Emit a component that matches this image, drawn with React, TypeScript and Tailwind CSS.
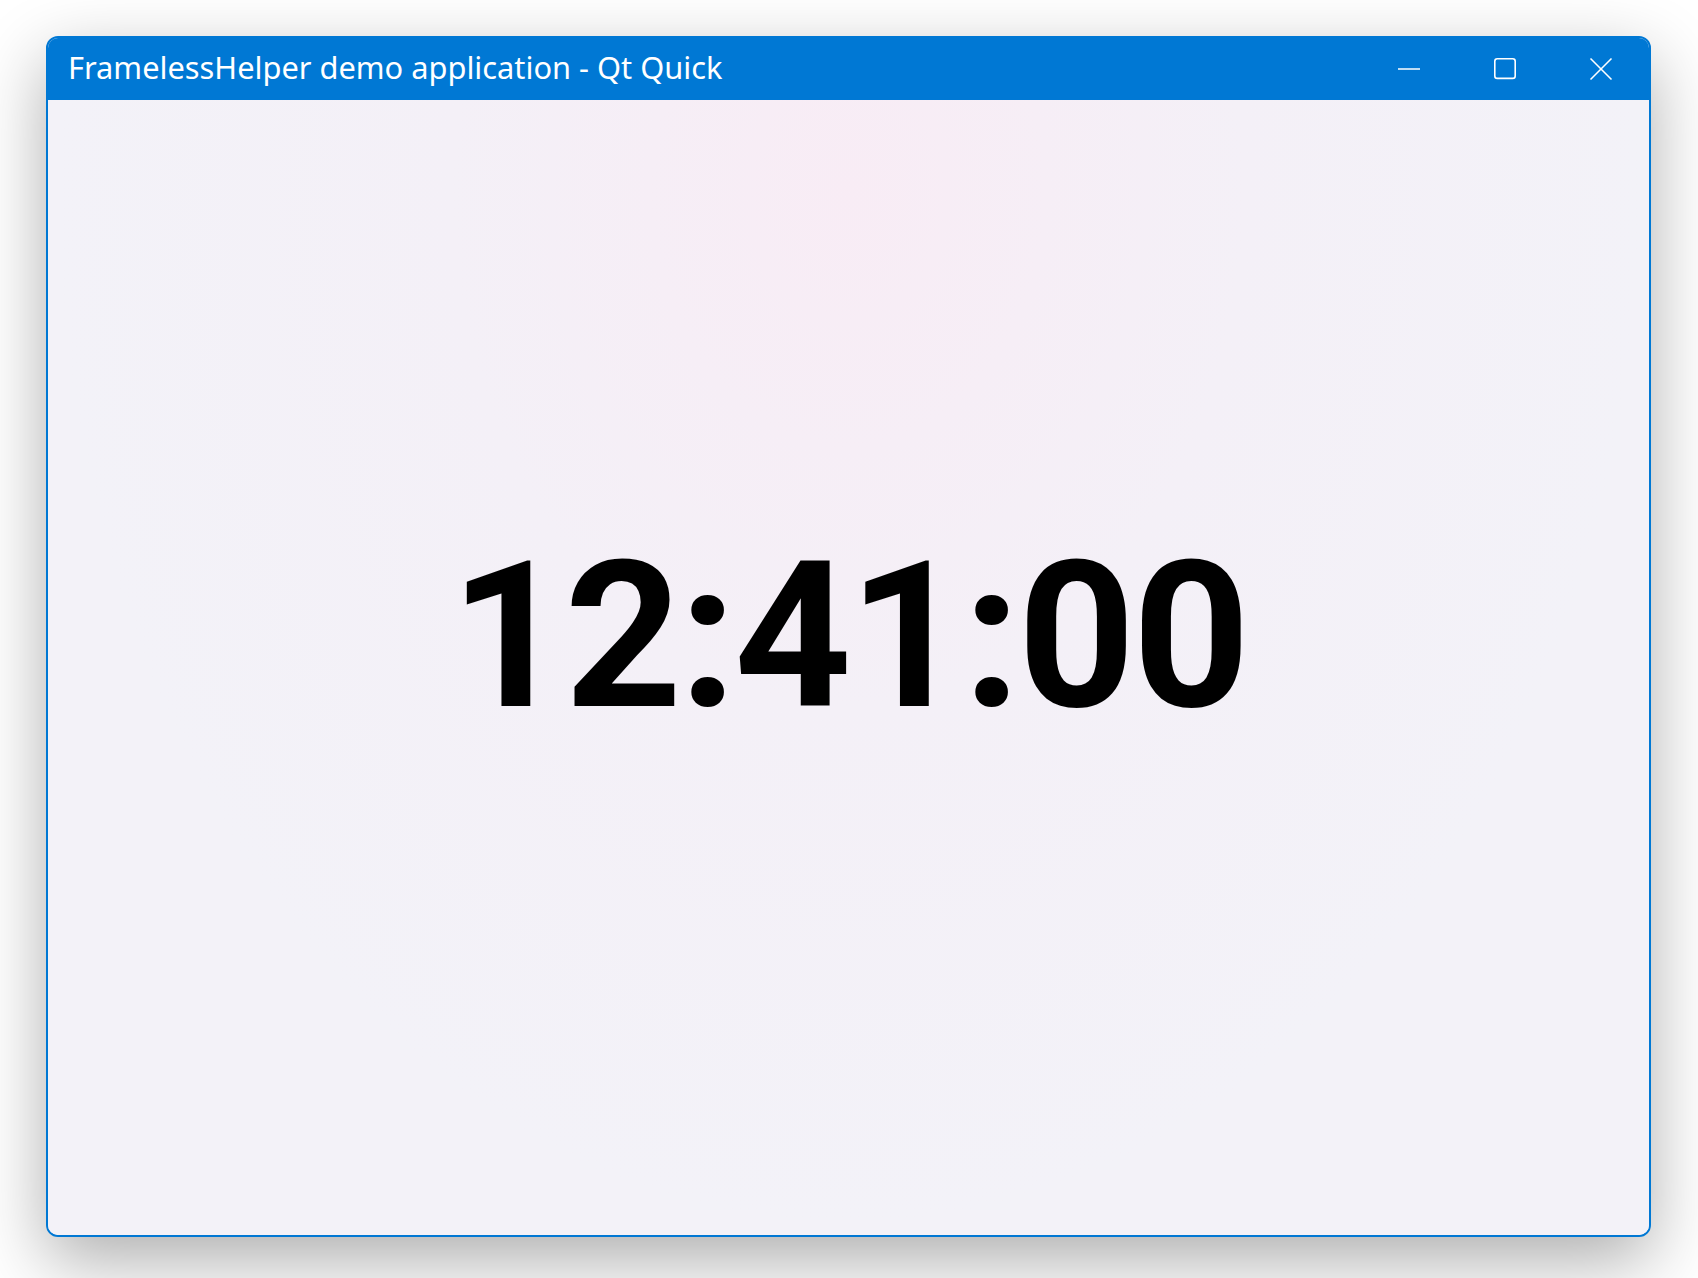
import { FC } from 'react'

const TitleButton: FC<{ kind: 'min' | 'max' | 'close' }> = ({ kind }) => (
  <div className="flex h-full w-[96px] items-center justify-center">
    <svg width="24" height="24" viewBox="0 0 24 24" fill="none" stroke="white" strokeWidth="1.6">
      {kind === 'min' && <line x1="1" y1="12" x2="23" y2="12" />}
      {kind === 'max' && <rect x="1.8" y="1.8" width="20.4" height="19.6" rx="2.5" />}
      {kind === 'close' && (
        <>
          <line x1="1.5" y1="1.5" x2="22.5" y2="22.5" />
          <line x1="22.5" y1="1.5" x2="1.5" y2="22.5" />
        </>
      )}
    </svg>
  </div>
)

export default function App() {
  return (
    <div className="h-[1278px] w-full overflow-hidden bg-white pl-[46px] pt-[36px]">
      <div className="flex h-[1201px] w-[1605px] flex-col overflow-hidden rounded-[12px] border-2 border-[#0078d4] bg-[#f3f2f8] shadow-[0_24px_70px_rgba(0,0,0,0.32)]">
        <div className="flex h-[62px] shrink-0 items-center bg-[#0078d4] pl-[20px]">
          <span
            className="mb-[4px] grow text-[30.8px] leading-none text-white"
            style={{ fontFamily: '"Noto Sans", "Open Sans", sans-serif' }}
          >
            FramelessHelper demo application - Qt Quick
          </span>
          <div className="flex h-full">
            <TitleButton kind="min" />
            <TitleButton kind="max" />
            <TitleButton kind="close" />
          </div>
        </div>
        <div className="flex grow items-center justify-center bg-[radial-gradient(ellipse_at_50%_8%,#f8ecf5_0%,#f4f0f7_35%,#f3f2f8_70%)] pb-[62px]">
          <span
            className="text-[205px] font-bold leading-none tracking-[-3px] text-black"
            style={{ fontFamily: 'Roboto, "Liberation Sans", sans-serif' }}
          >
            12:41:00
          </span>
        </div>
      </div>
    </div>
  )
}
